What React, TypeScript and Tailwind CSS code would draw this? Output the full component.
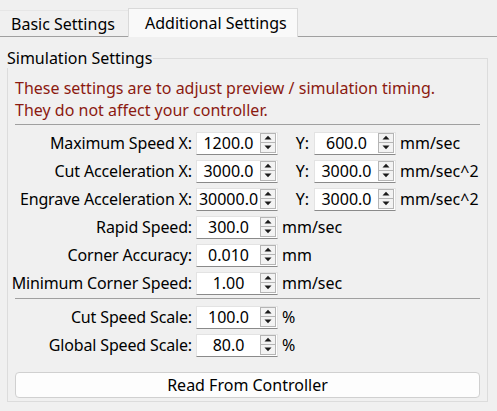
import React from "react";

const font = { fontFamily: '"Noto Sans", "Open Sans", sans-serif' };

function Spin({ value }: { value: string }) {
  return (
    <div className="flex h-[23px] w-[82px] shrink-0 items-stretch border border-[#e3e3e3] border-b-[#8a8a8a] bg-white">
      <div className="flex flex-1 items-center justify-center whitespace-nowrap leading-none">{value}</div>
      <div className="mr-[1px] flex w-[16px] flex-col">
        <div className="flex h-[10px] items-center justify-center border border-[#b5b5b5] bg-[#f3f3f3]">
          <svg width="8" height="5" viewBox="0 0 8 5">
            <path d="M0.5 4.5 L4 0.8 L7.5 4.5 Z" fill="#1a1a1a" />
          </svg>
        </div>
        <div className="flex h-[10px] items-center justify-center border border-t-0 border-[#b5b5b5] bg-[#f3f3f3]">
          <svg width="8" height="5" viewBox="0 0 8 5">
            <path d="M0.5 0.5 L4 4.2 L7.5 0.5 Z" fill="#1a1a1a" />
          </svg>
        </div>
      </div>
    </div>
  );
}

function Row({ label, x, y, unit }: { label: string; x: string; y?: string; unit: string }) {
  return (
    <div className="flex h-[28px] items-center">
      <div className="flex w-[177px] shrink-0 justify-end whitespace-nowrap tracking-[-0.15px]">
        <span>{label}</span>
      </div>
      <div className="ml-[4px]">
        <Spin value={x} />
      </div>
      {y !== undefined ? (
        <>
          <div className="w-[31px] shrink-0 text-right">Y:</div>
          <div className="ml-[5px]">
            <Spin value={y} />
          </div>
        </>
      ) : null}
      <div className="ml-[4px] whitespace-nowrap">{unit}</div>
    </div>
  );
}

export default function App() {
  return (
    <div className="h-[411px] w-[497px] overflow-hidden bg-[#f0f0f0] text-[16px] text-black" style={font}>
      {/* tab bar */}
      <div className="flex h-[37px] items-end">
        <div className="flex h-[27px] w-[128px] items-center border-t border-b border-t-[#e6e6e6] border-b-[#a0a0a0] pl-[11px]">
          Basic Settings
        </div>
        <div className="flex h-[29px] w-[170px] items-center border border-b-0 border-[#d9d9d9] bg-[#f9f9f9] pl-[16px]">
          Additional Settings
        </div>
        <div className="h-[1px] flex-1 bg-[#a0a0a0]" />
      </div>

      {/* group box */}
      <div className="relative ml-[7px] mt-[21px] w-[481px] border border-[#dcdcdc] px-[7px] pb-[3px]">
        <div className="absolute left-[-3px] top-[-11px] bg-[#f0f0f0] pl-[2px] pr-[1px] leading-[20px]">
          Simulation Settings
        </div>
        <div className="pt-[18px] leading-[22px] text-[#8b1a10]">
          <div>These settings are to adjust preview / simulation timing.</div>
          <div>They do not affect your controller.</div>
        </div>
        <div className="mt-[3px] h-[1px] bg-[#a0a0a0]" />
        <div className="mt-[4px]">
          <Row label="Maximum Speed X:" x="1200.0" y="600.0" unit="mm/sec" />
          <Row label="Cut Acceleration X:" x="3000.0" y="3000.0" unit="mm/sec^2" />
          <Row label="Engrave Acceleration X:" x="30000.0" y="3000.0" unit="mm/sec^2" />
          <Row label="Rapid Speed:" x="300.0" unit="mm/sec" />
          <Row label="Corner Accuracy:" x="0.010" unit="mm" />
          <Row label="Minimum Corner Speed:" x="1.00" unit="mm/sec" />
        </div>
        <div className="mt-[1px] h-[1px] bg-[#a0a0a0]" />
        <div className="mt-[4px]">
          <Row label="Cut Speed Scale:" x="100.0" unit="%" />
          <Row label="Global Speed Scale:" x="80.0" unit="%" />
        </div>
        <button className="mt-[13px] flex h-[26px] w-full items-center justify-center rounded-[4px] border border-[#d0d0d0] bg-[#fdfdfd]">
          Read From Controller
        </button>
      </div>
    </div>
  );
}
